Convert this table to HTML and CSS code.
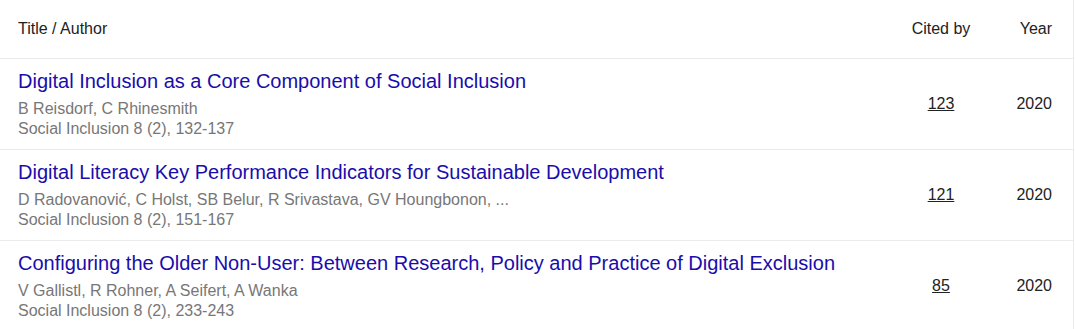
FILE: index.html
```html
<!DOCTYPE html>
<html>
<head>
<meta charset="utf-8">
<link rel="stylesheet" href="styles.css">
</head>
<body>
<div class="table">
  <div class="row head">
    <div class="c-title">Title / Author</div>
    <div class="c-cite">Cited by</div>
    <div class="c-year">Year</div>
  </div>
  <div class="row item">
    <div class="c-title">
      <a class="title" href="#">Digital Inclusion as a Core Component of Social Inclusion</a>
      <div class="gray">B Reisdorf, C Rhinesmith</div>
      <div class="gray">Social Inclusion 8 (2), 132-137</div>
    </div>
    <div class="c-cite"><a class="cite" href="#">123</a></div>
    <div class="c-year">2020</div>
  </div>
  <div class="row item">
    <div class="c-title">
      <a class="title" href="#">Digital Literacy Key Performance Indicators for Sustainable Development</a>
      <div class="gray">D Radovanović, C Holst, SB Belur, R Srivastava, GV Houngbonon, ...</div>
      <div class="gray">Social Inclusion 8 (2), 151-167</div>
    </div>
    <div class="c-cite"><a class="cite" href="#">121</a></div>
    <div class="c-year">2020</div>
  </div>
  <div class="row item">
    <div class="c-title">
      <a class="title" href="#">Configuring the Older Non-User: Between Research, Policy and Practice of Digital Exclusion</a>
      <div class="gray">V Gallistl, R Rohner, A Seifert, A Wanka</div>
      <div class="gray">Social Inclusion 8 (2), 233-243</div>
    </div>
    <div class="c-cite"><a class="cite" href="#">85</a></div>
    <div class="c-year">2020</div>
  </div>
</div>
</body>
</html>
```
FILE: styles.css
```css
html, body {
  margin: 0;
  padding: 0;
  background: #fff;
}
body {
  font-family: "Liberation Sans", Arial, sans-serif;
  color: #222;
}
.table {
  width: 1073px;
  border-right: 1px solid #ebebeb;
  min-height: 329px;
}
.row {
  display: flex;
  align-items: center;
}
.head {
  height: 58px;
  font-size: 16px;
  border-bottom: 1px solid #ebebeb;
}
.item {
  height: 90px;
  border-bottom: 1px solid #ebebeb;
}
.c-title {
  flex: 1;
  padding-left: 18px;
}
.c-cite {
  width: 106px;
  text-align: center;
}
.c-year {
  width: 58px;
  text-align: right;
  padding-right: 21px;
}
.item .c-cite, .item .c-year {
  font-size: 16px;
}
.item .c-title {
  align-self: flex-start;
  padding-top: 10px;
}
.title {
  display: block;
  font-size: 20px;
  line-height: 24px;
  color: #1a0dab;
  text-decoration: none;
  margin-bottom: 6px;
}
.gray {
  font-size: 16px;
  line-height: 20px;
  color: #777;
}
.cite {
  color: #222;
  text-decoration: underline;
}
```
